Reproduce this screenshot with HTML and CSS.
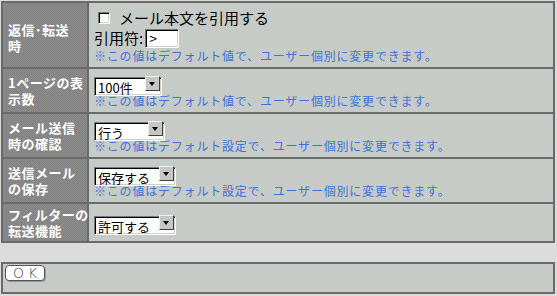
FILE: index.html
```html
<!DOCTYPE html>
<html lang="ja">
<head>
  <meta charset="UTF-8">
  <title>メール設定</title>
  <link rel="stylesheet" href="styles.css">
</head>
<body>
  <div class="settings">
    <div class="label label-first">返信･転送<br>時</div>
    <div class="value">
      <label class="line">
        <input type="checkbox" class="check">
        <span class="big">メール本文を引用する</span>
      </label>
      <div class="line line-quote">
        <span class="big">引用符:</span>
        <input type="text" class="quote-mark" value="&gt;">
      </div>
      <div class="note">※この値はデフォルト値で、ユーザー個別に変更できます。</div>
    </div>

    <div class="label">1ページの表<br>示数</div>
    <div class="value">
      <span class="dropdown w68">
        <select><option>100件</option></select>
        <span class="arrow"></span>
      </span>
      <div class="note">※この値はデフォルト値で、ユーザー個別に変更できます。</div>
    </div>

    <div class="label">メール送信<br>時の確認</div>
    <div class="value">
      <span class="dropdown w71">
        <select><option>行う</option></select>
        <span class="arrow"></span>
      </span>
      <div class="note">※この値はデフォルト設定で、ユーザー個別に変更できます。</div>
    </div>

    <div class="label">送信メール<br>の保存</div>
    <div class="value">
      <span class="dropdown w82">
        <select><option>保存する</option></select>
        <span class="arrow"></span>
      </span>
      <div class="note">※この値はデフォルト設定で、ユーザー個別に変更できます。</div>
    </div>

    <div class="label">フィルターの<br>転送機能</div>
    <div class="value">
      <span class="dropdown w82">
        <select><option>許可する</option></select>
        <span class="arrow"></span>
      </span>
    </div>
  </div>

  <div class="actions">
    <button class="ok">OK</button>
  </div>
</body>
</html>
```

FILE: styles.css
```css
body {
  margin: 0;
  background-color: #dcdcdc;
  font-family: "Noto Sans CJK JP", "DejaVu Sans", sans-serif;
}

.settings {
  display: grid;
  grid-template-columns: 84px 1fr;
  grid-template-rows: 64px 43px 43px 43px 37px;
  gap: 2px;
  box-sizing: border-box;
  width: 554px;
  margin: 1px 0 0 1px;
  border: 2px solid #6a6a6a;
  background-color: #6a6a6a;
}

.label {
  display: flex;
  flex-direction: column;
  justify-content: center;
  padding-left: 5px;
  color: #fff;
  font-size: 13px;
  font-weight: bold;
  line-height: 16px;
  letter-spacing: 0.5px;
  white-space: nowrap;
  background: repeating-conic-gradient(#8c8c8c 0 25%, #828282 0 50%) 0 0 / 2px 2px;
}

.label-first {
  padding-top: 6px;
}

.value {
  display: flex;
  flex-direction: column;
  justify-content: center;
  align-items: flex-start;
  padding-left: 5px;
  background: repeating-conic-gradient(#cbcfcb 0 25%, #c4c8c4 0 50%) 0 0 / 2px 2px;
}

.line {
  display: flex;
  align-items: center;
  height: 18px;
}

.line-quote {
  height: 19px;
  margin-top: 2px;
}

.big {
  font-size: 15px;
  line-height: 18px;
  color: #000;
}

.check {
  appearance: none;
  box-sizing: border-box;
  width: 12px;
  height: 12px;
  margin: 0 9px 0 4px;
  background: #fff;
  border: 1px solid;
  border-color: #7a7a7a #fff #fff #7a7a7a;
  box-shadow: inset 1px 1px 0 #000, inset -1px -1px 0 #d4d0c8;
}

.quote-mark {
  box-sizing: border-box;
  width: 34px;
  height: 19px;
  margin: 0 0 0 2px;
  padding: 0 3px;
  font-family: inherit;
  font-size: 14px;
  background: #fff;
  border: 1px solid;
  border-color: #7a7a7a #fff #fff #7a7a7a;
  box-shadow: inset 1px 1px 0 #000, inset -1px -1px 0 #d4d0c8;
  outline: none;
}

.note {
  margin-top: 1px;
  font-size: 12px;
  line-height: 13px;
  letter-spacing: 0.8px;
  color: #3d72d6;
  white-space: nowrap;
}

.dropdown {
  position: relative;
  display: block;
  height: 19px;
}

.dropdown select {
  appearance: none;
  box-sizing: border-box;
  width: 100%;
  height: 19px;
  margin: 0;
  padding: 0 0 0 3px;
  font-family: inherit;
  font-size: 13px;
  color: #000;
  background: #fff;
  border: 1px solid;
  border-color: #7a7a7a #fff #fff #7a7a7a;
  border-radius: 0;
  box-shadow: inset 1px 1px 0 #000, inset -1px -1px 0 #d4d0c8;
  outline: none;
}

.w68 { width: 68px; }
.w71 { width: 71px; }
.w82 { width: 82px; }

.arrow {
  position: absolute;
  top: 2px;
  right: 2px;
  box-sizing: border-box;
  width: 15px;
  height: 15px;
  background: #c6c6c6;
  border: 1px solid;
  border-color: #f0f0f0 #404040 #404040 #f0f0f0;
  pointer-events: none;
}

.arrow::after {
  content: "";
  position: absolute;
  left: 3px;
  top: 5px;
  border-left: 3.5px solid transparent;
  border-right: 3.5px solid transparent;
  border-top: 4px solid #000;
}

.actions {
  box-sizing: border-box;
  width: 554px;
  height: 32px;
  margin: 19px 0 0 1px;
  padding: 1px 2px;
  border: 2px solid #6a6a6a;
  background: repeating-conic-gradient(#cbcfcb 0 25%, #c4c8c4 0 50%) 0 0 / 2px 2px;
}

.ok {
  display: block;
  box-sizing: border-box;
  width: 40px;
  height: 16px;
  padding: 0 0 0 7px;
  font-family: "DejaVu Sans", sans-serif;
  font-size: 14px;
  font-weight: 200;
  line-height: 14px;
  letter-spacing: 4px;
  color: #444;
  text-align: left;
  background: #fff;
  border: 1px solid #555;
  border-radius: 4px;
  box-shadow: 1px 1px 0 #999;
}
```
